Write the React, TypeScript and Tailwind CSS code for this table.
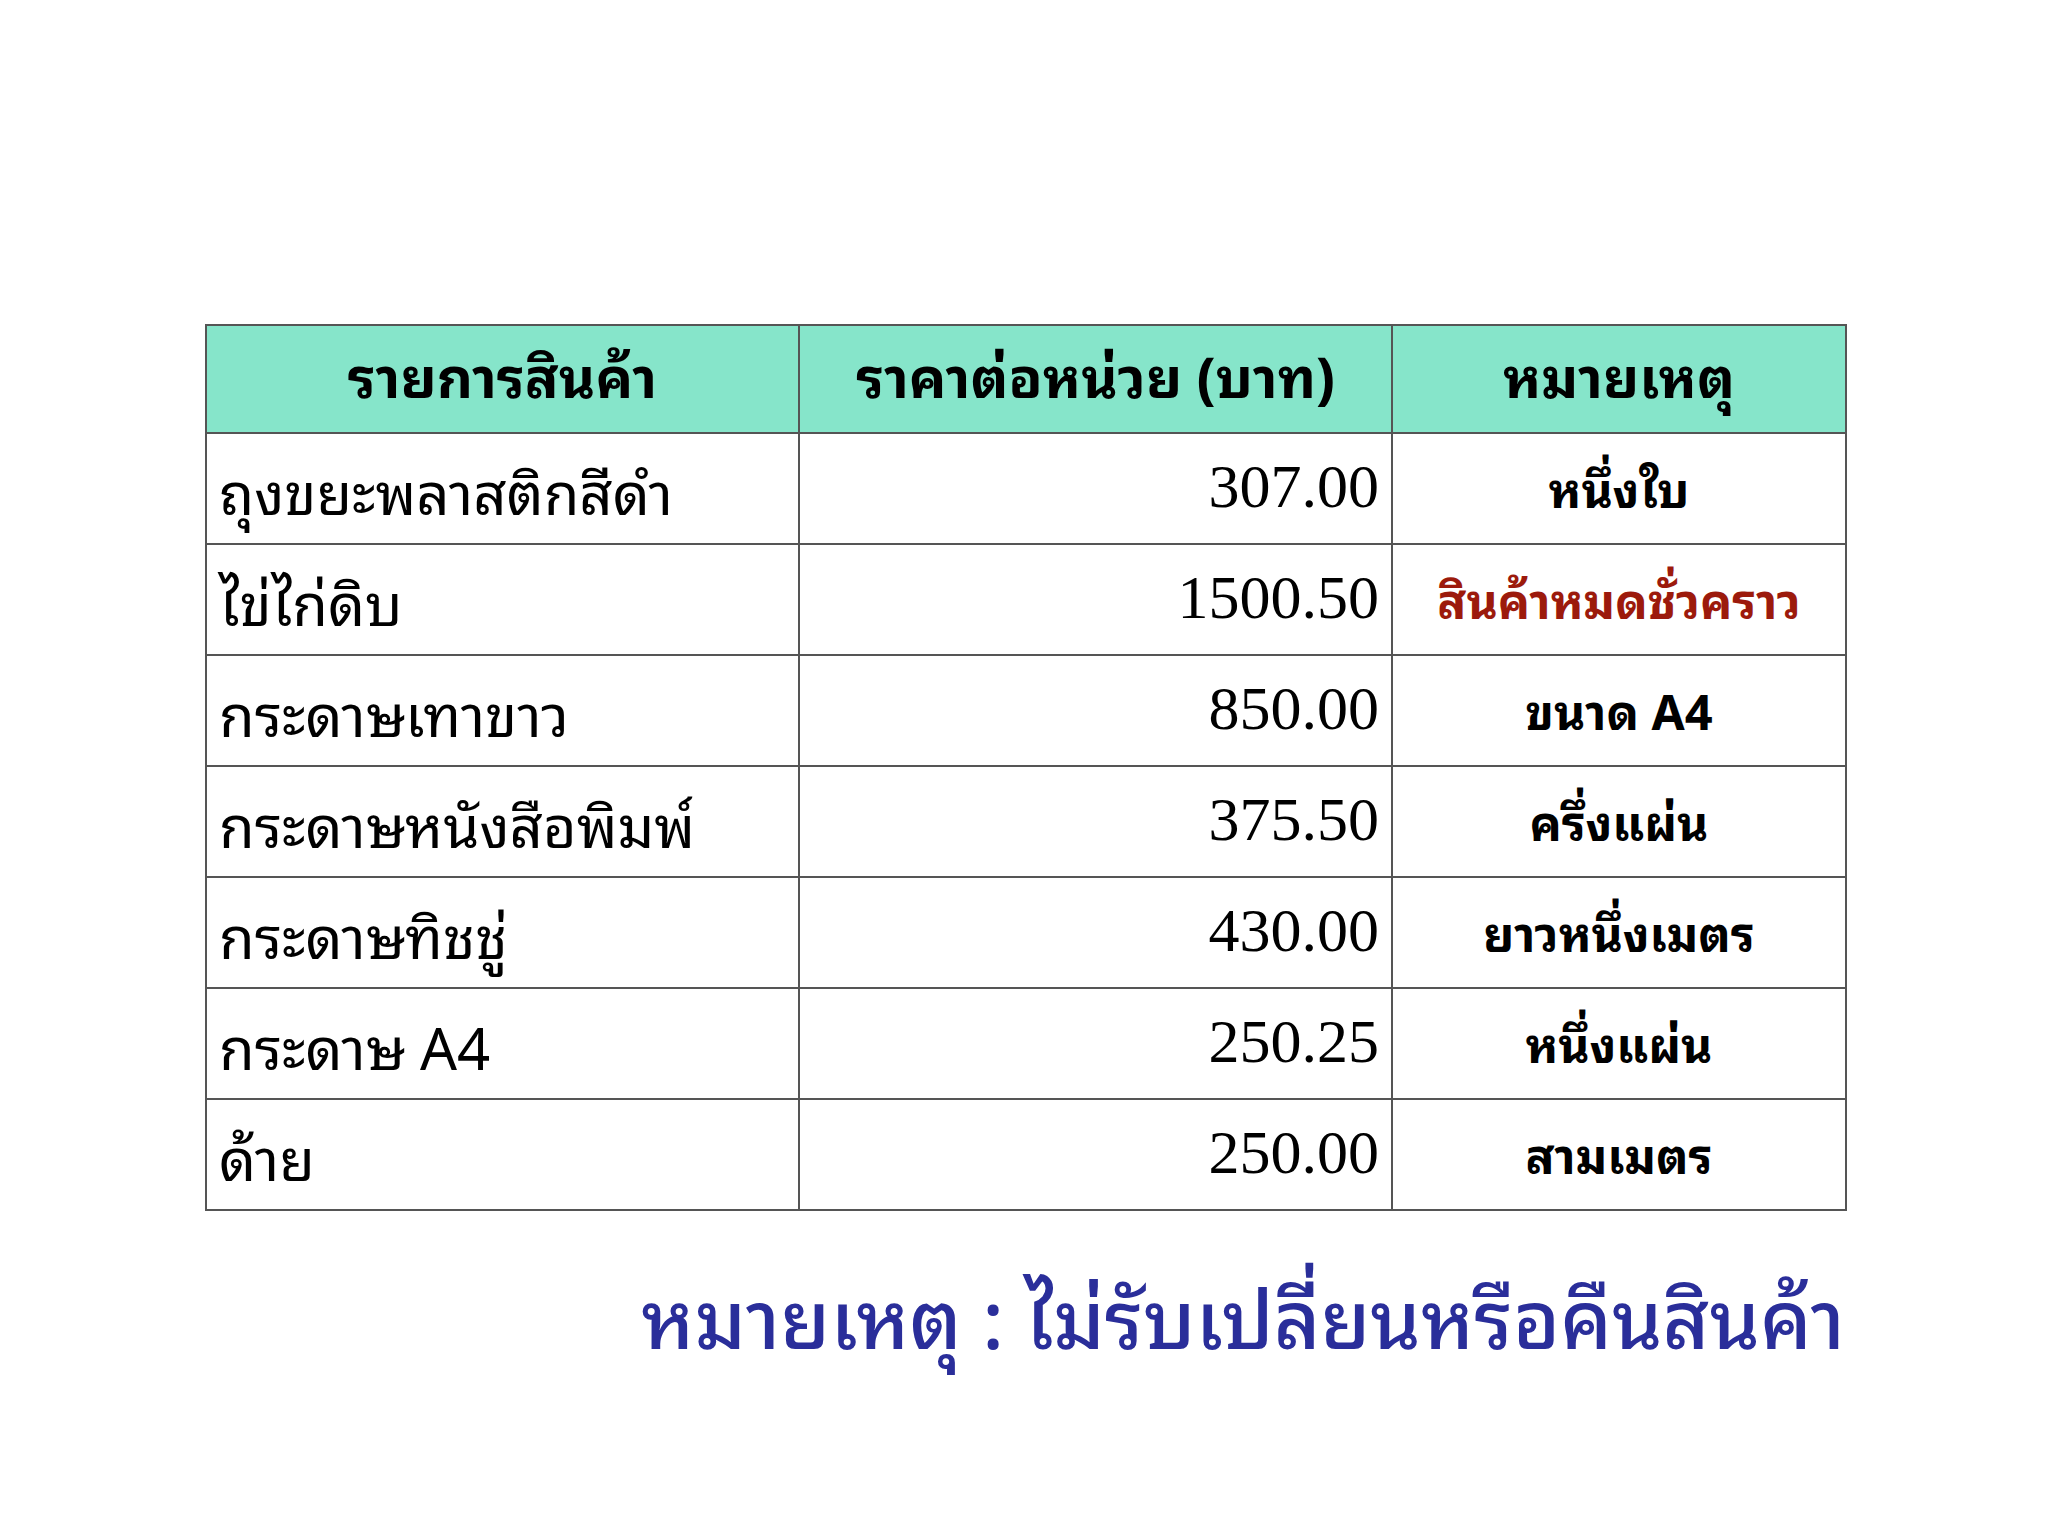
import React from 'react'

const rows = [
  { name: 'ถุงขยะพลาสติกสีดำ', price: '307.00', note: 'หนึ่งใบ' },
  { name: 'ไข่ไก่ดิบ', price: '1500.50', note: 'สินค้าหมดชั่วคราว', red: true },
  { name: 'กระดาษเทาขาว', price: '850.00', note: 'ขนาด A4' },
  { name: 'กระดาษหนังสือพิมพ์', price: '375.50', note: 'ครึ่งแผ่น' },
  { name: 'กระดาษทิชชู่', price: '430.00', note: 'ยาวหนึ่งเมตร' },
  { name: 'กระดาษ A4', price: '250.25', note: 'หนึ่งแผ่น' },
  { name: 'ด้าย', price: '250.00', note: 'สามเมตร' },
]

const thai = "font-['Noto_Sans_Thai_Looped','Loma','Garuda','Noto_Sans_Thai','Tahoma',sans-serif]"

export default function App() {
  return (
    <div className="min-h-screen w-[2048px] bg-white pt-[324px] pl-[205px]">
      <div className="w-[1640px]">
        <table className="w-[1640px] table-fixed border-collapse border-2 border-[#555]">
          <colgroup>
            <col className="w-[593px]" />
            <col className="w-[593px]" />
            <col className="w-[454px]" />
          </colgroup>
          <thead>
            <tr className="h-[108px] bg-[#86e5ca]">
              {['รายการสินค้า', 'ราคาต่อหน่วย (บาท)', 'หมายเหตุ'].map(h => (
                <th
                  key={h}
                  className={`border-2 border-[#555] pb-3 text-center text-[56px] font-bold text-black ${thai}`}
                >
                  {h}
                </th>
              ))}
            </tr>
          </thead>
          <tbody>
            {rows.map(r => (
              <tr key={r.name} className="h-[111px]">
                <td className={`border-2 border-[#555] pl-3 text-[58px] text-black ${thai}`}>
                  {r.name}
                </td>
                <td className="border-2 border-[#555] pr-3 pb-1 text-right font-['Liberation_Serif',serif] text-[62px] text-black">
                  {r.price}
                </td>
                <td
                  className={`border-2 border-[#555] pb-1 text-center text-[48px] font-bold ${thai} ${
                    r.red ? 'text-[#9c1a0c]' : 'text-black'
                  }`}
                >
                  {r.note}
                </td>
              </tr>
            ))}
          </tbody>
        </table>
        <div className={`mt-[62px] text-right text-[80px] font-medium leading-none text-[#2a2e9a] ${thai}`}>
          หมายเหตุ : ไม่รับเปลี่ยนหรือคืนสินค้า
        </div>
      </div>
    </div>
  )
}
